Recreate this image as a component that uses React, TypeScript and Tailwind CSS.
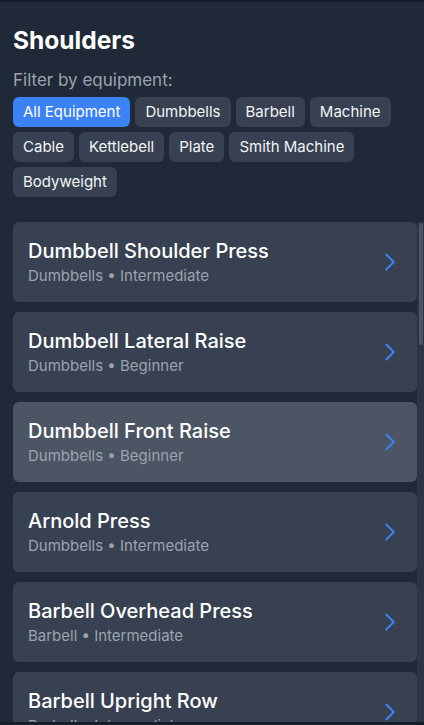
const filters = [
  "All Equipment",
  "Dumbbells",
  "Barbell",
  "Machine",
  "Cable",
  "Kettlebell",
  "Plate",
  "Smith Machine",
  "Bodyweight",
]

const exercises = [
  { name: "Dumbbell Shoulder Press", equipment: "Dumbbells", level: "Intermediate" },
  { name: "Dumbbell Lateral Raise", equipment: "Dumbbells", level: "Beginner" },
  { name: "Dumbbell Front Raise", equipment: "Dumbbells", level: "Beginner" },
  { name: "Arnold Press", equipment: "Dumbbells", level: "Intermediate" },
  { name: "Barbell Overhead Press", equipment: "Barbell", level: "Intermediate" },
  { name: "Barbell Upright Row", equipment: "Barbell", level: "Intermediate" },
  { name: "Push Press", equipment: "Barbell", level: "Advanced" },
  { name: "Machine Shoulder Press", equipment: "Machine", level: "Beginner" },
  { name: "Machine Lateral Raise", equipment: "Machine", level: "Beginner" },
  { name: "Reverse Pec Deck", equipment: "Machine", level: "Beginner" },
  { name: "Cable Lateral Raise", equipment: "Cable", level: "Intermediate" },
  { name: "Cable Front Raise", equipment: "Cable", level: "Beginner" },
  { name: "Face Pull", equipment: "Cable", level: "Beginner" },
  { name: "Kettlebell Press", equipment: "Kettlebell", level: "Intermediate" },
  { name: "Plate Front Raise", equipment: "Plate", level: "Beginner" },
  { name: "Smith Machine Shoulder Press", equipment: "Smith Machine", level: "Beginner" },
  { name: "Pike Push-Up", equipment: "Bodyweight", level: "Intermediate" },
  { name: "Handstand Push-Up", equipment: "Bodyweight", level: "Advanced" },
]

function Chevron() {
  return (
    <svg
      viewBox="0 0 24 24"
      fill="none"
      stroke="currentColor"
      strokeWidth={2}
      className="h-6 w-6 shrink-0 text-[#3b82f6]"
    >
      <path strokeLinecap="round" strokeLinejoin="round" d="m8.25 4.5 7.5 7.5-7.5 7.5" />
    </svg>
  )
}

export default function App() {
  return (
    <div
      className="flex h-[725px] flex-col overflow-hidden bg-[#1f2937] text-white"
      style={{ fontFamily: "Inter, 'Noto Sans', sans-serif" }}
    >
      <div className="h-[2px] shrink-0 bg-[#141b26]" />

      <div className="flex min-h-0 flex-1 flex-col pl-[13px] pt-[22px]">
        <div className="pr-[13px]">
          <h1 className="mb-[12px] text-[24.5px] leading-8 font-bold text-white">Shoulders</h1>
          <p className="mb-[5px] text-[17px] leading-6 text-[#9ca3af]">Filter by equipment:</p>
          <div className="flex flex-wrap gap-[5px]">
            {filters.map((f, i) => (
              <button
                key={f}
                className={
                  i === 0
                    ? "h-[30px] rounded-md bg-[#3b82f6] px-2.5 text-[15px] leading-5 text-white"
                    : "h-[30px] rounded-md bg-[#374151] px-2.5 text-[15px] leading-5 text-[#f3f4f6]"
                }
              >
                {f}
              </button>
            ))}
          </div>
        </div>

        <div className="mt-[25px] flex min-h-0 flex-1">
          {/* exercise list */}
          <div className="flex min-h-0 min-w-0 flex-1 flex-col gap-[10px] overflow-hidden">
            {exercises.map((ex, i) => (
              <div
                key={ex.name}
                className={
                  "flex h-20 shrink-0 items-center justify-between rounded-md px-[15px] " +
                  (i === 2 ? "bg-[#4b5563]" : "bg-[#374151]")
                }
              >
                <div className="min-w-0">
                  <div className="text-[20px] leading-[26px] font-medium text-white">{ex.name}</div>
                  <div className="mt-[2px] text-[15px] leading-5 text-[#9ca3af]">
                    {ex.equipment} • {ex.level}
                  </div>
                </div>
                <Chevron />
              </div>
            ))}
          </div>

          {/* scrollbar */}
          <div className="w-[7px] shrink-0 bg-[#2b3544] pt-[1px]">
            <div className="mx-auto h-[122px] w-[4px] rounded-full bg-[#4b5563]" />
          </div>
        </div>
      </div>

      <div className="h-[3px] shrink-0 bg-[#171e2a]" />
    </div>
  )
}
